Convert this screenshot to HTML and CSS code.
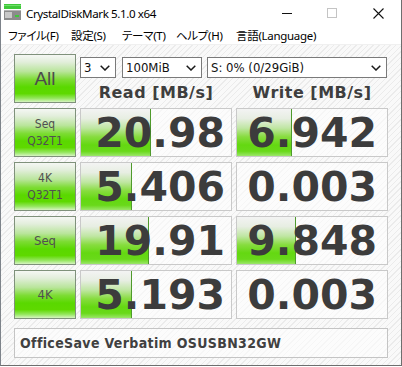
FILE: index.html
```html
<!DOCTYPE html>
<html>
<head>
<meta charset="utf-8">
<link rel="stylesheet" href="styles.css">
</head>
<body>
<div class="window">
  <div class="titlebar">
    <svg class="appicon" width="17" height="17" viewBox="0 0 17 17">
      <rect x="0" y="0" width="17" height="5" fill="#3fc83a"/>
      <rect x="0" y="1" width="17" height="1" fill="#6fe06a"/>
      <rect x="0" y="6" width="17" height="10" fill="#8c8c8c"/>
      <rect x="0" y="6" width="17" height="1" fill="#b5b5b5"/>
      <rect x="1" y="8" width="7" height="6" fill="#c9c9c9"/>
      <rect x="11" y="11" width="4" height="2" fill="#3fc83a"/>
    </svg>
    <span class="title">CrystalDiskMark 5.1.0 x64</span>
    <div class="controls">
      <span class="ctl"><svg width="10" height="10" viewBox="0 0 10 10"><line x1="0" y1="5.5" x2="10" y2="5.5" stroke="#111" stroke-width="1"/></svg></span>
      <span class="ctl"><svg width="10" height="10" viewBox="0 0 10 10"><rect x="0.5" y="0.5" width="9" height="9" fill="none" stroke="#c4c4c4" stroke-width="1"/></svg></span>
      <span class="ctl"><svg width="11" height="11" viewBox="0 0 11 11"><path d="M0.5 0.5 L10.5 10.5 M10.5 0.5 L0.5 10.5" stroke="#111" stroke-width="1.1"/></svg></span>
    </div>
  </div>
  <div class="menubar">
    <span class="mi m1">ファイル(F)</span>
    <span class="mi m2">設定(S)</span>
    <span class="mi m3">テーマ(T)</span>
    <span class="mi m4">ヘルプ(H)</span>
    <span class="mi m5">言語(Language)</span>
  </div>
  <div class="client">
    <div class="grid">
      <div class="btn all">All</div>
      <div class="topright">
        <div class="selects">
          <div class="sel s1"><span>3</span><svg class="chev" width="10" height="6" viewBox="0 0 10 6"><path d="M0.7 0.7 L5 5 L9.3 0.7" fill="none" stroke="#1a1a1a" stroke-width="1.5"/></svg></div>
          <div class="sel s2"><span>100MiB</span><svg class="chev" width="10" height="6" viewBox="0 0 10 6"><path d="M0.7 0.7 L5 5 L9.3 0.7" fill="none" stroke="#1a1a1a" stroke-width="1.5"/></svg></div>
          <div class="sel s3"><span>S: 0% (0/29GiB)</span><svg class="chev" width="10" height="6" viewBox="0 0 10 6"><path d="M0.7 0.7 L5 5 L9.3 0.7" fill="none" stroke="#1a1a1a" stroke-width="1.5"/></svg></div>
        </div>
        <div class="heads">
          <div class="head">Read [MB/s]</div>
          <div class="head">Write [MB/s]</div>
        </div>
      </div>

      <div class="btn two"><span>Seq</span><span>Q32T1</span></div>
      <div class="cell read"><div class="bar" style="width:70px"></div><div class="num">20.98</div></div>
      <div class="cell write"><div class="bar" style="width:55px"></div><div class="num">6.942</div></div>

      <div class="btn two"><span>4K</span><span>Q32T1</span></div>
      <div class="cell read"><div class="bar" style="width:51px"></div><div class="num">5.406</div></div>
      <div class="cell write"><div class="num">0.003</div></div>

      <div class="btn one">Seq</div>
      <div class="cell read"><div class="bar" style="width:68px"></div><div class="num">19.91</div></div>
      <div class="cell write"><div class="bar" style="width:59px"></div><div class="num">9.848</div></div>

      <div class="btn one">4K</div>
      <div class="cell read"><div class="bar" style="width:51px"></div><div class="num">5.193</div></div>
      <div class="cell write"><div class="num">0.003</div></div>
    </div>
    <div class="footer">OfficeSave Verbatim OSUSBN32GW</div>
  </div>
</div>
</body>
</html>
```
FILE: styles.css
```css
html, body {
  margin: 0;
  padding: 0;
  background: #ffffff;
}
.window {
  width: 402px;
  height: 366px;
  box-sizing: border-box;
  border-left: 1px solid #7d838a;
  border-right: 1px solid #6e6e6e;
  border-bottom: 1px solid #6e6e6e;
  background: #ffffff;
  display: flex;
  flex-direction: column;
}
.titlebar {
  height: 26px;
  display: flex;
  align-items: center;
  padding-left: 3px;
  background: #ffffff;
}
.appicon {
  display: block;
  margin-right: 5px;
  margin-top: -1px;
}
.title {
  font-family: "Noto Sans", "Open Sans", sans-serif;
  font-size: 11.6px;
  color: #000;
  letter-spacing: -0.4px;
}
.controls {
  margin-left: auto;
  display: flex;
  align-items: center;
}
.ctl {
  width: 46px;
  height: 26px;
  display: flex;
  align-items: center;
  justify-content: center;
}
.ctl:first-child {
  width: 44px;
  padding-left: 3px;
}
.menubar {
  height: 18px;
  display: flex;
  align-items: center;
  padding-left: 7px;
  font-family: "Noto Sans", "Noto Sans CJK JP", sans-serif;
  font-feature-settings: "palt";
  font-size: 11.5px;
  letter-spacing: -0.3px;
  color: #000;
  border-bottom: 1px solid #f0f0f0;
  white-space: nowrap;
}
.mi { display: block; }
.m1 { width: 63px; }
.m2 { width: 51px; }
.m3 { width: 54px; }
.m4 { width: 60px; }
.client {
  flex: 1;
  padding: 9px 0 0 13px;
  background-color: #f8f8f8;
  background-image: repeating-linear-gradient(135deg, #f9f9f9 0px, #f9f9f9 3px, #ebebeb 3px, #ebebeb 4px);
  font-family: "DejaVu Sans", Verdana, sans-serif;
}
.grid {
  display: grid;
  grid-template-columns: 62px 152px 152px;
  grid-template-rows: repeat(5, 49px);
  column-gap: 4px;
  row-gap: 5px;
}
.btn {
  box-sizing: border-box;
  border: 1px solid #7f917b;
  background: linear-gradient(to bottom, #f5f7f4 0%, #e2eedb 15%, #b9e59b 35%, #7ddc34 52%, #5ad800 68%, #5ed900 82%, #93e65c 92%, #d7f4c2 100%);
  color: #505050;
  display: flex;
  flex-direction: column;
  align-items: center;
  justify-content: center;
  font-family: "DejaVu Sans Condensed", "DejaVu Sans", sans-serif;
}
.btn.all {
  font-size: 19px;
  font-family: "Liberation Sans", sans-serif;
  color: #4c4c4c;
}
.btn.two {
  font-size: 12px;
  line-height: 17px;
}
.btn.one {
  font-size: 13px;
}
.topright {
  grid-column: 2 / 4;
  display: flex;
  flex-direction: column;
}
.selects {
  display: flex;
  margin-top: 3px;
  height: 21px;
}
.sel {
  box-sizing: border-box;
  height: 21px;
  border: 1px solid #7a7a7a;
  background: #fff;
  display: flex;
  align-items: center;
  padding-left: 3px;
  padding-right: 5px;
  font-family: "DejaVu Sans Condensed", "DejaVu Sans", sans-serif;
  font-size: 13px;
  color: #111;
}
.sel .chev {
  margin-left: auto;
}
.s1 { width: 36px; margin-right: 6px; }
.s2 { width: 80px; margin-right: 5px; }
.s3 { width: 180px; }
.heads {
  display: grid;
  grid-template-columns: 152px 152px;
  column-gap: 4px;
  margin-top: 4px;
}
.head {
  text-align: center;
  font-size: 16px;
  font-weight: bold;
  color: #3e3e3e;
  line-height: 22px;
  letter-spacing: 0.5px;
}
.cell {
  box-sizing: border-box;
  border: 1px solid #c9c9c9;
  background: rgba(255,255,255,0.55);
  display: grid;
  overflow: hidden;
}
.cell > * {
  grid-area: 1 / 1;
}
.bar {
  justify-self: start;
  height: 100%;
  box-sizing: border-box;
  border-right: 1px solid #4f9a2c;
  background: linear-gradient(to bottom, #f3f3f3 0%, #e7eee2 20%, #bfe6a2 40%, #87dc3f 58%, #64d811 75%, #69d91a 88%, #a6e97a 100%);
}
.num {
  text-align: right;
  font-size: 41px;
  font-weight: bold;
  color: #3c3c3c;
  line-height: 47px;
  padding-top: 1px;
}
.read .num { padding-right: 6px; }
.write .num { padding-right: 10px; }
.footer {
  box-sizing: border-box;
  margin-top: 9px;
  width: 374px;
  height: 30px;
  border: 1px solid #c4c4c4;
  background: rgba(255,255,255,0.55);
  display: flex;
  align-items: center;
  padding-left: 5px;
  font-family: "DejaVu Sans Condensed", "DejaVu Sans", sans-serif;
  font-weight: bold;
  font-size: 14px;
  letter-spacing: 0.35px;
  color: #404040;
}
```
